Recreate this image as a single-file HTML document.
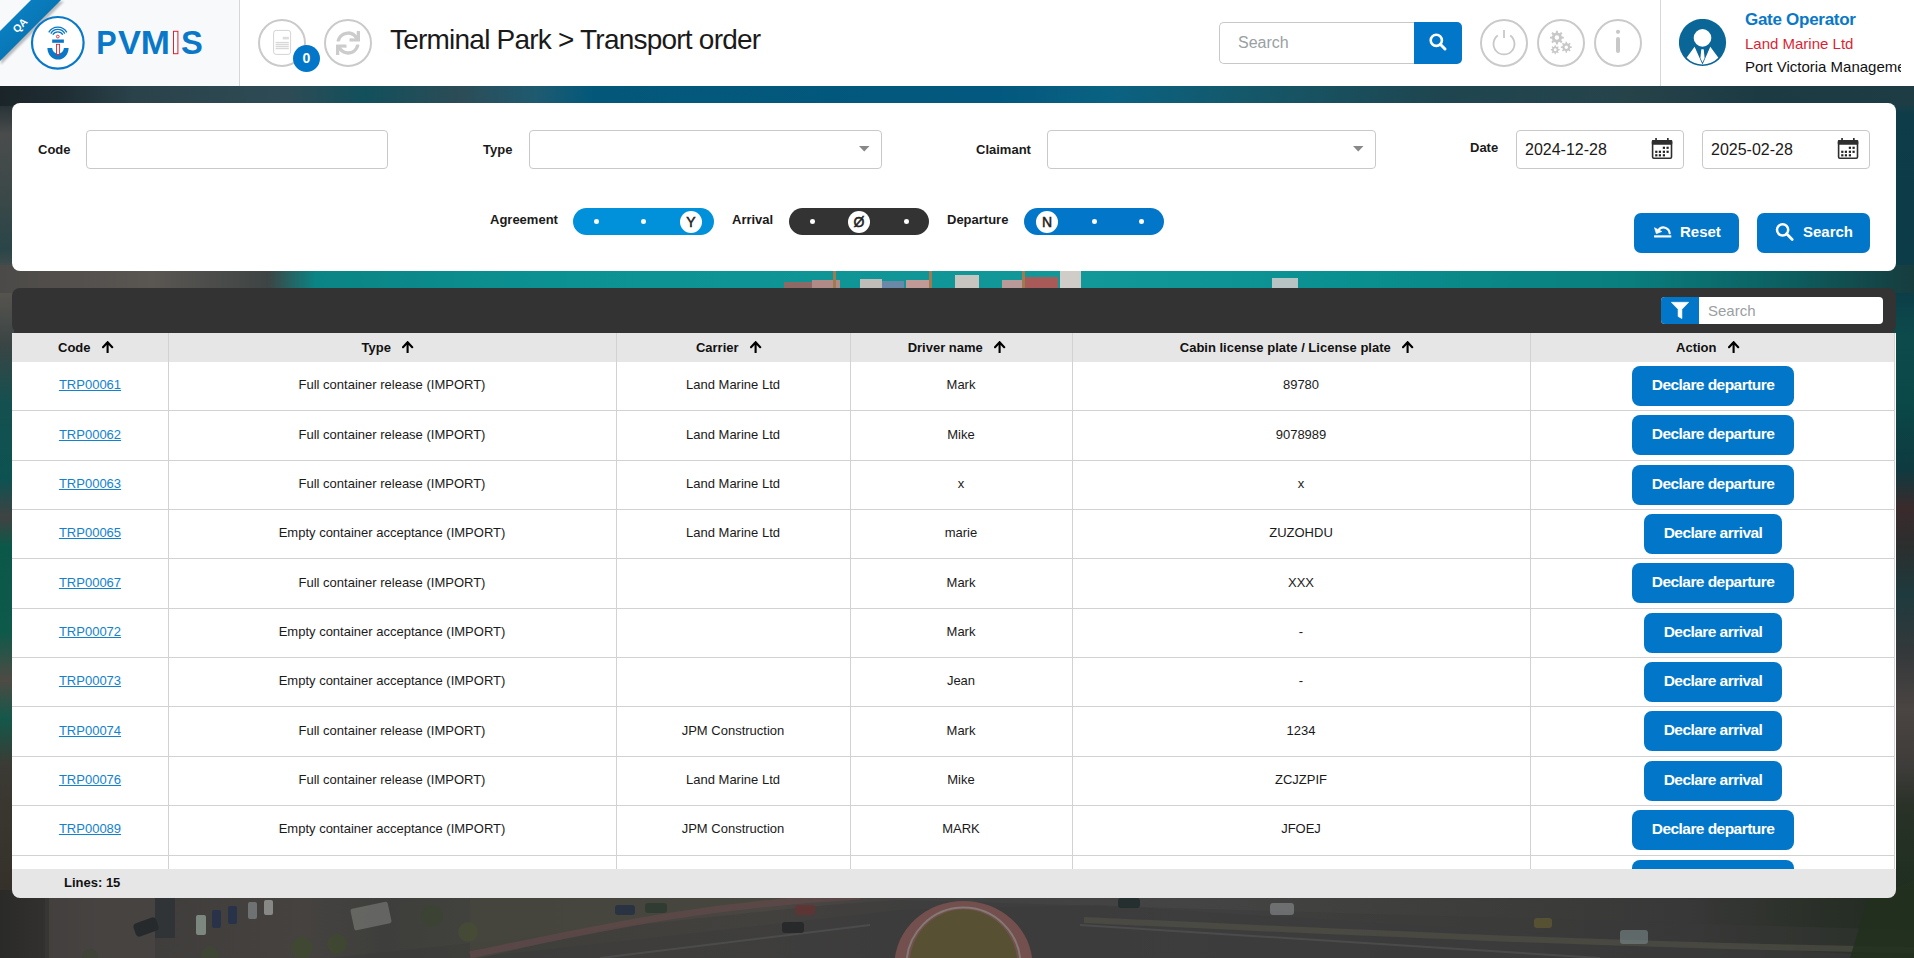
<!DOCTYPE html>
<html><head><meta charset="utf-8">
<style>
*{box-sizing:border-box;margin:0;padding:0}
html,body{width:1914px;height:958px;overflow:hidden}
body{font-family:"Liberation Sans",sans-serif;color:#1a1a1a;position:relative;background:#3a3b3a}
.abs{position:absolute}
#bg{position:absolute;left:0;top:0;width:1914px;height:958px;overflow:hidden}
#header{position:absolute;left:0;top:0;width:1914px;height:86px;background:#fff}
#logoarea{position:absolute;left:0;top:0;width:240px;height:86px;background:#f8f9fb;border-right:1px solid #d6d6d6}
.circ{position:absolute;border:2px solid #cacaca;border-radius:50%;background:#fff}
.panel{position:absolute;background:#fff}
.lbl{position:absolute;font-weight:bold;font-size:13px;color:#1a1a1a}
.inp{position:absolute;border:1px solid #c9c9c9;border-radius:4px;background:#fff}
.btn{position:absolute;background:#0277c9;color:#fff;border-radius:7px;font-weight:bold;font-size:15px;text-align:center}
#tbl{position:absolute;left:12px;top:333px;width:1884px;height:536px;background:#fff;overflow:hidden}
.hdr{position:absolute;left:0;top:0;width:1882px;height:29px;background:#e6e6e6}
.vl{position:absolute;top:0;width:1px;height:536px;background:#d2d2d2}
.hl{position:absolute;left:0;width:1882px;height:1px;background:#d2d2d2}
.th{position:absolute;top:0;height:29px;line-height:29px;font-weight:bold;font-size:13px;text-align:center;color:#111}
.td{position:absolute;font-size:13px;text-align:center;color:#1a1a1a;line-height:16px}
.lnk{color:#1282cf;text-decoration:underline}
.abtn{position:absolute;height:40px;line-height:37px;letter-spacing:-0.55px;background:#0277c9;color:#fff;border-radius:8px;font-weight:bold;font-size:15.5px;text-align:center}
.dot{position:absolute;width:5px;height:4.5px;border-radius:50%;background:#fff}
.knob{position:absolute;width:22px;height:22px;border-radius:50%;background:#fff;color:#222;font-size:14px;line-height:22px;text-align:center;-webkit-text-stroke:0.5px #222}
</style></head>
<body>
<div id="bg">
<svg width="1914" height="958" viewBox="0 0 1914 958" style="position:absolute;left:0;top:0">
 <defs>
  <linearGradient id="gtop" gradientUnits="userSpaceOnUse" x1="0" x2="1914" y1="0" y2="0">
   <stop offset="0" stop-color="#1b2529"/><stop offset="0.03" stop-color="#1e2c32"/><stop offset="0.07" stop-color="#2a424a"/>
   <stop offset="0.15" stop-color="#2e4b55"/><stop offset="0.19" stop-color="#11505c"/><stop offset="0.24" stop-color="#2c4c56"/>
   <stop offset="0.28" stop-color="#1e5a70"/><stop offset="0.31" stop-color="#03587a"/><stop offset="0.52" stop-color="#02587e"/>
   <stop offset="0.58" stop-color="#0a6282"/><stop offset="0.65" stop-color="#14586a"/><stop offset="0.75" stop-color="#1e4650"/>
   <stop offset="0.85" stop-color="#26434a"/><stop offset="0.92" stop-color="#1c3a42"/><stop offset="1" stop-color="#1e3c44"/>
  </linearGradient>
  <linearGradient id="ggap" gradientUnits="userSpaceOnUse" x1="0" x2="1914" y1="0" y2="0">
   <stop offset="0" stop-color="#4c4a48"/><stop offset="0.08" stop-color="#5a5652"/><stop offset="0.14" stop-color="#3e4444"/>
   <stop offset="0.165" stop-color="#0b8485"/><stop offset="0.3" stop-color="#0c9293"/><stop offset="0.57" stop-color="#129898"/>
   <stop offset="0.7" stop-color="#0a9090"/><stop offset="0.85" stop-color="#0a7e7e"/><stop offset="0.93" stop-color="#0c6062"/>
   <stop offset="1" stop-color="#173c3e"/>
  </linearGradient>
  <linearGradient id="gleft" gradientUnits="userSpaceOnUse" x1="0" x2="0" y1="0" y2="958">
   <stop offset="0.10" stop-color="#1c2a30"/><stop offset="0.14" stop-color="#4a4c4c"/><stop offset="0.21" stop-color="#3a4848"/>
   <stop offset="0.26" stop-color="#2a4548"/><stop offset="0.30" stop-color="#5a5550"/><stop offset="0.36" stop-color="#3a4444"/>
   <stop offset="0.42" stop-color="#155050"/><stop offset="0.50" stop-color="#0d5252"/><stop offset="0.54" stop-color="#404242"/><stop offset="0.57" stop-color="#0c5848"/>
   <stop offset="0.66" stop-color="#0e5a4a"/><stop offset="0.71" stop-color="#4e4a44"/><stop offset="0.75" stop-color="#13584a"/>
   <stop offset="0.80" stop-color="#3c3a34"/><stop offset="0.93" stop-color="#35302a"/><stop offset="1" stop-color="#2a2a28"/>
  </linearGradient>
  <linearGradient id="gright" gradientUnits="userSpaceOnUse" x1="0" x2="0" y1="0" y2="958">
   <stop offset="0.09" stop-color="#2a4448"/><stop offset="0.12" stop-color="#0e3c48"/><stop offset="0.3" stop-color="#0c3c48"/>
   <stop offset="0.35" stop-color="#0d4a4c"/><stop offset="0.42" stop-color="#0b4848"/><stop offset="0.49" stop-color="#0e3a40"/>
   <stop offset="0.53" stop-color="#3a2a2c"/><stop offset="0.57" stop-color="#2c2e2e"/><stop offset="0.62" stop-color="#1e3a3e"/>
   <stop offset="0.68" stop-color="#34383a"/><stop offset="0.74" stop-color="#4a4442"/><stop offset="0.8" stop-color="#3e3c3a"/>
   <stop offset="0.84" stop-color="#2a3228"/><stop offset="0.93" stop-color="#1e2e20"/><stop offset="1" stop-color="#1a2a1c"/>
  </linearGradient>
  <linearGradient id="gbot" gradientUnits="userSpaceOnUse" x1="0" x2="1914" y1="0" y2="0">
   <stop offset="0" stop-color="#2a2a28"/><stop offset="0.025" stop-color="#333130"/><stop offset="0.05" stop-color="#3e3c3a"/>
   <stop offset="0.16" stop-color="#454240"/><stop offset="0.2" stop-color="#3e3f3c"/><stop offset="0.3" stop-color="#45443e"/>
   <stop offset="0.4" stop-color="#4a4642"/><stop offset="0.5" stop-color="#414141"/><stop offset="0.62" stop-color="#444444"/>
   <stop offset="0.75" stop-color="#3e3e3c"/><stop offset="0.88" stop-color="#383838"/><stop offset="0.93" stop-color="#2e322c"/>
   <stop offset="1" stop-color="#1f2a1f"/>
  </linearGradient>
 </defs>
 <rect x="0" y="0" width="1914" height="958" fill="#2c3a3c"/>
 <rect x="0" y="80" width="1914" height="26" fill="url(#gtop)"/>
 <rect x="0" y="265" width="1914" height="28" fill="url(#ggap)"/>
 <rect x="0" y="0" width="14" height="958" fill="url(#gleft)"/>
 <rect x="1894" y="0" width="20" height="958" fill="url(#gright)"/>
 <rect x="0" y="890" width="1914" height="68" fill="url(#gbot)"/>
 <rect x="0" y="80" width="14" height="26" fill="url(#gtop)"/>
 <rect x="1894" y="80" width="20" height="26" fill="url(#gtop)"/>
 <rect x="0" y="265" width="14" height="28" fill="url(#ggap)"/>
 <rect x="1894" y="265" width="20" height="28" fill="url(#ggap)"/>
 <!-- ships in gap -->
 <rect x="784" y="282" width="30" height="6" fill="#8e6a66"/>
 <rect x="812" y="280" width="28" height="8" fill="#b08a86"/>
 <rect x="833" y="271" width="3" height="17" fill="#a07a50"/>
 <rect x="860" y="279" width="22" height="9" fill="#c0bcb8"/>
 <rect x="882" y="281" width="22" height="7" fill="#6a88a8"/>
 <rect x="906" y="280" width="24" height="8" fill="#c09a96"/>
 <rect x="929" y="271" width="3" height="17" fill="#a07a50"/>
 <rect x="955" y="275" width="24" height="13" fill="#c8c4c0"/>
 <rect x="1002" y="280" width="22" height="8" fill="#b89a98"/>
 <rect x="1024" y="277" width="34" height="11" fill="#a85a58"/>
 <rect x="1022" y="271" width="3" height="17" fill="#a07a50"/>
 <rect x="1060" y="271" width="21" height="17" fill="#d0ccc8"/>
 <rect x="1272" y="278" width="26" height="10" fill="#b8c4c4"/>
 <!-- bottom scene -->
 <path d="M470 958 L900 910 L1100 905 L1914 958 Z" fill="#3c3c3e" opacity="0.5"/>
 <path d="M330 958 C600 930 800 905 900 900 L1914 930 L1914 958 Z" fill="#3a3a3a" opacity="0.4"/>
 <ellipse cx="963.5" cy="965" rx="69" ry="64" fill="#73504e"/><ellipse cx="963.5" cy="965" rx="57" ry="57.5" fill="none" stroke="#8a8a86" stroke-width="2" opacity="0.7"/>
 <ellipse cx="963.5" cy="965" rx="54" ry="55.4" fill="#585032"/>
 <path d="M600 958 L870 925 M1080 925 L1600 958" stroke="#5a5a5a" stroke-width="2" opacity="0.5"/>
 <path d="M470 958 L480 958 C600 930 700 905 860 896 L860 890 L470 890 Z" fill="#46463e" opacity="0.8"/><path d="M470 955 C600 928 700 905 860 896" stroke="#5e4848" stroke-width="7" fill="none" opacity="0.8"/>
 <path d="M1084 920 C1300 930 1600 945 1914 950" stroke="#58584a" stroke-width="6" fill="none" opacity="0.5"/>
 <rect x="45" y="898" width="4" height="60" fill="#3a3836" opacity="0.8"/>
 <rect x="49" y="898" width="106" height="60" fill="#4a4644" opacity="0.7"/>
 <rect x="155" y="898" width="20" height="40" fill="#2c3236" opacity="0.8"/>
 <rect x="134" y="920" width="24" height="14" rx="4" fill="#262a2c" transform="rotate(-20 146 927)"/>
 <rect x="196" y="915" width="10" height="20" rx="2" fill="#8a9a90" opacity="0.8"/>
 <rect x="212" y="910" width="9" height="18" rx="2" fill="#26324a" opacity="0.9"/>
 <rect x="228" y="906" width="9" height="18" rx="2" fill="#26324a" opacity="0.9"/>
 <rect x="248" y="902" width="9" height="17" rx="2" fill="#7a7e80" opacity="0.8"/>
 <rect x="264" y="900" width="9" height="15" rx="2" fill="#9a9a98" opacity="0.8"/>
 <rect x="352" y="905" width="38" height="22" rx="2" fill="#6e6e6c" opacity="0.8" transform="rotate(-12 371 916)"/>
 <circle cx="302" cy="948" r="11" fill="#3e4a2e" opacity="0.7"/>
 <circle cx="337" cy="944" r="10" fill="#3e4a2e" opacity="0.7"/>
 <circle cx="432" cy="916" r="11" fill="#3a4530" opacity="0.7"/>
 <circle cx="468" cy="932" r="10" fill="#465030" opacity="0.6"/>
 <circle cx="210" cy="955" r="9" fill="#3e4a2e" opacity="0.6"/>
 <circle cx="90" cy="957" r="8" fill="#3a4430" opacity="0.5"/>
 <rect x="615" y="905" width="20" height="10" rx="3" fill="#232e44" opacity="0.8"/>
 <rect x="645" y="903" width="22" height="10" rx="3" fill="#2a3a30" opacity="0.8"/>
 <rect x="795" y="905" width="20" height="10" rx="3" fill="#6a3030" opacity="0.7"/>
 <rect x="782" y="922" width="22" height="11" rx="3" fill="#222426" opacity="0.8"/>
 <rect x="1118" y="898" width="22" height="10" rx="3" fill="#1e2a2a" opacity="0.8"/>
 <rect x="1270" y="903" width="24" height="12" rx="3" fill="#8a8e90" opacity="0.6"/>
 <rect x="1620" y="930" width="28" height="14" rx="3" fill="#7a8a8a" opacity="0.6"/>
 <rect x="1534" y="918" width="18" height="10" rx="3" fill="#6a6030" opacity="0.6"/>
 <path d="M1868 898 L1914 880 L1914 958 L1850 958 Z" fill="#22301f" opacity="0.85"/>
</svg>
</div>

<div id="header">
 <div id="logoarea"></div>
 <svg class="abs" style="left:0;top:0" width="240" height="86" viewBox="0 0 240 86">
  <defs><linearGradient id="rib" x1="0" y1="0" x2="1" y2="1"><stop offset="0" stop-color="#0b86cc"/><stop offset="1" stop-color="#06679f"/></linearGradient>
  <filter id="sh" x="-20%" y="-20%" width="140%" height="140%"><feGaussianBlur stdDeviation="1.2"/></filter></defs>
  <polygon points="33,0 63,0 0,63 0,33" fill="#000" opacity="0.25" filter="url(#sh)" transform="translate(1,1.5)"/>
  <polygon points="31,0 61,0 0,61 0,31" fill="url(#rib)"/>
  <text x="19.8" y="29.2" transform="rotate(-45 19.8 25.2)" fill="#fff" font-size="10.5" font-weight="bold" font-family="Liberation Sans" text-anchor="middle">QA</text>
  <circle cx="57.8" cy="42.8" r="25.8" fill="#fff" stroke="#0a78c8" stroke-width="2.2"/>
  <path d="M48.8 32.4 A10.4 10.4 0 0 1 66.8 32.4" fill="none" stroke="#0a78c8" stroke-width="1.3"/>
  <path d="M50.8 33.6 A8 8 0 0 1 64.8 33.6" fill="none" stroke="#0a78c8" stroke-width="1.3"/>
  <path d="M52.8 34.8 A5.7 5.7 0 0 1 62.8 34.8" fill="none" stroke="#0a78c8" stroke-width="1.3"/>
  <circle cx="57.8" cy="36.6" r="1.4" fill="#fff" stroke="#e02030" stroke-width="0.9"/>
  <rect x="52.2" y="39.5" width="11.7" height="3.3" fill="#0a78c8"/>
  <path d="M47.4 48 H52.2 A5.85 5.6 0 0 0 63.9 48 H68.6 A10.6 11.6 0 0 1 47.4 48 Z" fill="#0a78c8"/>
  <rect x="56.5" y="44.3" width="3.1" height="10.2" fill="#fff" stroke="#e02030" stroke-width="0.9"/>
  <text transform="translate(96.20 54.2) scale(0.926 1)" fill="#0a78c8" font-size="33" font-weight="bold" font-family="Liberation Sans">P</text><text transform="translate(118.00 54.2) scale(1.041 1)" fill="#0a78c8" font-size="33" font-weight="bold" font-family="Liberation Sans">V</text><text transform="translate(140.70 54.2) scale(1.062 1)" fill="#0a78c8" font-size="33" font-weight="bold" font-family="Liberation Sans">M</text>
  <rect x="173.5" y="31.3" width="4.4" height="22.4" fill="#fff" stroke="#e02030" stroke-width="1"/>
  <text transform="translate(181.00 54.2) scale(0.990 1)" fill="#0a78c8" font-size="33" font-weight="bold" font-family="Liberation Sans">S</text>
 </svg>
 <div class="circ" style="left:258px;top:19px;width:48px;height:48px"></div>
 <svg class="abs" style="left:270px;top:28px" width="26" height="30" viewBox="0 0 26 30">
  <rect x="3.6" y="2.4" width="17" height="24" rx="2.5" fill="#fff" stroke="#d4d4d4" stroke-width="1"/>
  <rect x="12.7" y="8.8" width="6.2" height="2.6" fill="#dcdcdc"/>
  <rect x="5.6" y="13.9" width="13.2" height="1.3" fill="#d8d8d8"/>
  <rect x="5.6" y="15.9" width="13.2" height="1.3" fill="#d8d8d8"/>
  <rect x="5.6" y="17.9" width="13.2" height="1.3" fill="#d8d8d8"/>
  <rect x="5.6" y="19.9" width="13.2" height="1.3" fill="#d8d8d8"/>
 </svg>
 <div class="abs" style="left:293px;top:44.5px;width:27px;height:27px;border-radius:50%;background:#0277c9;color:#fff;font-weight:bold;font-size:14px;line-height:27px;text-align:center">0</div>
 <div class="circ" style="left:324px;top:19px;width:48px;height:48px"></div>
 <svg class="abs" style="left:336px;top:31px" width="24" height="24" viewBox="0 0 512 512">
  <path fill="#cccccc" d="M440.65 12.57l4 82.77A247.16 247.16 0 0 0 255.83 8C134.73 8 33.91 94.92 12.29 209.82A12 12 0 0 0 24.09 224h49.05a12 12 0 0 0 11.67-9.26 175.91 175.91 0 0 1 317-56.94l-101.46-4.86a12 12 0 0 0-12.57 12v47.41a12 12 0 0 0 12 12H500a12 12 0 0 0 12-12V12a12 12 0 0 0-12-12h-47.37a12 12 0 0 0-11.98 12.57zM255.83 432a175.61 175.61 0 0 1-146-77.8l101.8 4.87a12 12 0 0 0 12.57-12v-47.4a12 12 0 0 0-12-12H12a12 12 0 0 0-12 12V500a12 12 0 0 0 12 12h47.35a12 12 0 0 0 12-12.6l-4.15-82.57A247.17 247.17 0 0 0 255.83 504c121.11 0 221.93-86.92 243.55-201.82a12 12 0 0 0-11.8-14.18h-49.05a12 12 0 0 0-11.67 9.26A175.86 175.86 0 0 1 255.83 432z"/>
 </svg>
 <div class="abs" style="left:390px;top:22px;font-size:28px;line-height:36px;letter-spacing:-0.78px;color:#1a1a1a;white-space:nowrap">Terminal Park &gt; Transport order</div>

 <div class="abs" style="left:1219px;top:22px;width:196px;height:42px;border:1px solid #c8c8c8;border-right:none;border-radius:5px 0 0 5px;background:#fff"></div>
 <div class="abs" style="left:1238px;top:33px;font-size:16px;line-height:20px;color:#9aa0a3">Search</div>
 <div class="abs" style="left:1414px;top:22px;width:48px;height:42px;background:#0277c9;border-radius:0 5px 5px 0"></div>
 <svg class="abs" style="left:1428px;top:32px" width="20" height="20" viewBox="0 0 20 20">
  <circle cx="8.3" cy="8.3" r="5.6" fill="none" stroke="#fff" stroke-width="2.6"/>
  <line x1="12.3" y1="12.3" x2="17" y2="17" stroke="#fff" stroke-width="3" stroke-linecap="round"/>
 </svg>

 <div class="circ" style="left:1480px;top:19px;width:48px;height:48px"></div>
 <svg class="abs" style="left:1480px;top:19px" width="48" height="48" viewBox="0 0 48 48">
  <path d="M17.8 16.5 A10.5 10.5 0 1 0 30.2 16.5" fill="none" stroke="#c8c8c8" stroke-width="1.8"/>
  <line x1="24" y1="11" x2="24" y2="19" stroke="#c8c8c8" stroke-width="1.8"/>
 </svg>
 <div class="circ" style="left:1537px;top:19px;width:48px;height:48px"></div>
 <svg class="abs" style="left:1537px;top:19px" width="48" height="48" viewBox="0 0 48 48"><path fill-rule="evenodd" fill="#c8c8c8" d="M24.82 17.52 L26.84 17.70 L26.84 19.50 L24.82 19.68 L24.56 20.53 L24.14 21.32 L25.45 22.87 L24.17 24.15 L22.62 22.84 L21.83 23.26 L20.98 23.52 L20.80 25.54 L19.00 25.54 L18.82 23.52 L17.97 23.26 L17.18 22.84 L15.63 24.15 L14.35 22.87 L15.66 21.32 L15.24 20.53 L14.98 19.68 L12.96 19.50 L12.96 17.70 L14.98 17.52 L15.24 16.67 L15.66 15.88 L14.35 14.33 L15.63 13.05 L17.18 14.36 L17.97 13.94 L18.82 13.68 L19.00 11.66 L20.80 11.66 L20.98 13.68 L21.83 13.94 L22.62 14.36 L24.17 13.05 L25.45 14.33 L24.14 15.88 L24.56 16.67 Z M22.14 18.60 A2.24 2.24 0 1 0 17.66 18.60 A2.24 2.24 0 1 0 22.14 18.60 Z M33.17 27.35 L34.75 27.49 L34.75 28.91 L33.17 29.05 L32.96 29.72 L32.64 30.33 L33.66 31.55 L32.65 32.56 L31.43 31.54 L30.82 31.86 L30.15 32.07 L30.01 33.65 L28.59 33.65 L28.45 32.07 L27.78 31.86 L27.17 31.54 L25.95 32.56 L24.94 31.55 L25.96 30.33 L25.64 29.72 L25.43 29.05 L23.85 28.91 L23.85 27.49 L25.43 27.35 L25.64 26.68 L25.96 26.07 L24.94 24.85 L25.95 23.84 L27.17 24.86 L27.78 24.54 L28.45 24.33 L28.59 22.75 L30.01 22.75 L30.15 24.33 L30.82 24.54 L31.43 24.86 L32.65 23.84 L33.66 24.85 L32.64 26.07 L32.96 26.68 Z M31.06 28.20 A1.76 1.76 0 1 0 27.54 28.20 A1.76 1.76 0 1 0 31.06 28.20 Z M21.36 30.01 L22.66 30.12 L22.66 31.28 L21.36 31.39 L21.19 31.94 L20.93 32.45 L21.77 33.44 L20.94 34.27 L19.95 33.43 L19.44 33.69 L18.89 33.86 L18.78 35.16 L17.62 35.16 L17.51 33.86 L16.96 33.69 L16.45 33.43 L15.46 34.27 L14.63 33.44 L15.47 32.45 L15.21 31.94 L15.04 31.39 L13.74 31.28 L13.74 30.12 L15.04 30.01 L15.21 29.46 L15.47 28.95 L14.63 27.96 L15.46 27.13 L16.45 27.97 L16.96 27.71 L17.51 27.54 L17.62 26.24 L18.78 26.24 L18.89 27.54 L19.44 27.71 L19.95 27.97 L20.94 27.13 L21.77 27.96 L20.93 28.95 L21.19 29.46 Z M19.64 30.70 A1.44 1.44 0 1 0 16.76 30.70 A1.44 1.44 0 1 0 19.64 30.70 Z"/></svg>
 <div class="circ" style="left:1594px;top:19px;width:48px;height:48px"></div>
 <svg class="abs" style="left:1594px;top:19px" width="48" height="48" viewBox="0 0 48 48">
  <circle cx="24" cy="12.8" r="2.1" fill="#c8c8c8"/>
  <rect x="22" y="18" width="4" height="16" rx="2" fill="#c8c8c8"/>
 </svg>

 <div class="abs" style="left:1660px;top:0;width:1px;height:86px;background:#d6d6d6"></div>
 <svg class="abs" style="left:1679px;top:19px" width="48" height="48" viewBox="0 0 48 48">
  <defs><clipPath id="avc"><circle cx="23.5" cy="23.5" r="22"/></clipPath></defs>
  <circle cx="23.5" cy="23.5" r="23.6" fill="#0b6698"/>
  <g clip-path="url(#avc)">
   <circle cx="23.5" cy="18.9" r="8.8" fill="#fff"/>
   <path d="M15.6 27.7 L23.5 45.5 L31.3 27.7 L47 49 L0 49 Z" fill="#fff"/>
   <path d="M22.3 30.3 L24.7 30.3 L25.6 39 L23.5 43.4 L21.4 39 Z" fill="#fff"/>
  </g>
 </svg>
 <div class="abs" style="left:1745px;top:9px;font-size:17px;font-weight:bold;line-height:22px;letter-spacing:-0.28px;color:#0a78c8;white-space:nowrap">Gate Operator</div>
 <div class="abs" style="left:1745px;top:34px;font-size:15px;line-height:20px;color:#dc1f35;white-space:nowrap">Land Marine Ltd</div>
 <div class="abs" style="left:1745px;top:57px;width:156px;overflow:hidden;font-size:15px;line-height:20px;color:#111;white-space:nowrap">Port Victoria Management</div>
</div>

<div class="panel" style="left:12px;top:103px;width:1884px;height:168px;border-radius:8px"></div>
<div class="lbl" style="left:38px;top:142px;line-height:16px">Code</div>
<div class="inp" style="left:86px;top:130px;width:302px;height:39px"></div>
<div class="lbl" style="left:483px;top:142px;line-height:16px">Type</div>
<div class="inp" style="left:529px;top:130px;width:353px;height:39px"></div>
<svg class="abs" style="left:859px;top:146px" width="11" height="6" viewBox="0 0 11 6"><path d="M0 0 H10.5 L5.25 5.5 Z" fill="#888"/></svg>
<div class="lbl" style="left:976px;top:142px;line-height:16px">Claimant</div>
<div class="inp" style="left:1047px;top:130px;width:329px;height:39px"></div>
<svg class="abs" style="left:1353px;top:146px" width="11" height="6" viewBox="0 0 11 6"><path d="M0 0 H10.5 L5.25 5.5 Z" fill="#888"/></svg>
<div class="lbl" style="left:1470px;top:140px;line-height:16px">Date</div>
<div class="inp" style="left:1516px;top:130px;width:168px;height:39px"></div>
<div class="abs" style="left:1525px;top:140px;font-size:16px;line-height:19px;color:#1a1a1a">2024-12-28</div>
<svg class="abs" style="left:1646px;top:134px" width="32" height="30" viewBox="0 0 32 30">
 <rect x="6.6" y="6.9" width="18.9" height="17.3" rx="1.2" fill="#fff" stroke="#2e2e2e" stroke-width="1.6"/>
 <rect x="5.8" y="6.1" width="20.5" height="4.7" rx="1" fill="#2e2e2e"/>
 <rect x="9.2" y="4" width="1.7" height="3" fill="#2e2e2e"/><rect x="21" y="4" width="1.7" height="3" fill="#2e2e2e"/>
 <rect x="16.8" y="12.7" width="2.2" height="2.2" fill="#222"/><rect x="20.5" y="12.7" width="2.2" height="2.2" fill="#222"/><rect x="9.2" y="16.7" width="2.2" height="2.2" fill="#222"/><rect x="12.8" y="16.7" width="2.2" height="2.2" fill="#222"/><rect x="16.8" y="16.7" width="2.2" height="2.2" fill="#222"/><rect x="20.5" y="16.7" width="2.2" height="2.2" fill="#222"/><rect x="9.2" y="20.2" width="2.2" height="2.2" fill="#222"/><rect x="12.8" y="20.2" width="2.2" height="2.2" fill="#222"/><rect x="16.8" y="20.2" width="2.2" height="2.2" fill="#222"/>
</svg>
<div class="inp" style="left:1702px;top:130px;width:168px;height:39px"></div>
<div class="abs" style="left:1711px;top:140px;font-size:16px;line-height:19px;color:#1a1a1a">2025-02-28</div>
<svg class="abs" style="left:1832px;top:134px" width="32" height="30" viewBox="0 0 32 30">
 <rect x="6.6" y="6.9" width="18.9" height="17.3" rx="1.2" fill="#fff" stroke="#2e2e2e" stroke-width="1.6"/>
 <rect x="5.8" y="6.1" width="20.5" height="4.7" rx="1" fill="#2e2e2e"/>
 <rect x="9.2" y="4" width="1.7" height="3" fill="#2e2e2e"/><rect x="21" y="4" width="1.7" height="3" fill="#2e2e2e"/>
 <rect x="16.8" y="12.7" width="2.2" height="2.2" fill="#222"/><rect x="20.5" y="12.7" width="2.2" height="2.2" fill="#222"/><rect x="9.2" y="16.7" width="2.2" height="2.2" fill="#222"/><rect x="12.8" y="16.7" width="2.2" height="2.2" fill="#222"/><rect x="16.8" y="16.7" width="2.2" height="2.2" fill="#222"/><rect x="20.5" y="16.7" width="2.2" height="2.2" fill="#222"/><rect x="9.2" y="20.2" width="2.2" height="2.2" fill="#222"/><rect x="12.8" y="20.2" width="2.2" height="2.2" fill="#222"/><rect x="16.8" y="20.2" width="2.2" height="2.2" fill="#222"/>
</svg>

<div class="lbl" style="left:490px;top:212px;line-height:16px">Agreement</div>
<div class="abs" style="left:573px;top:208px;width:141px;height:27px;border-radius:14px;background:#0091da"></div>
<div class="dot" style="left:594px;top:219.2px"></div><div class="dot" style="left:641px;top:219.2px"></div>
<div class="knob" style="left:679.9px;top:210.8px">Y</div>
<div class="lbl" style="left:732px;top:212px;line-height:16px">Arrival</div>
<div class="abs" style="left:789px;top:208px;width:140px;height:27px;border-radius:14px;background:#333"></div>
<div class="dot" style="left:809.5px;top:219.2px"></div><div class="dot" style="left:903.5px;top:219.2px"></div>
<div class="knob" style="left:847.9px;top:210.8px">&Oslash;</div>
<div class="lbl" style="left:947px;top:212px;line-height:16px">Departure</div>
<div class="abs" style="left:1024px;top:208px;width:140px;height:27px;border-radius:14px;background:#0277c9"></div>
<div class="dot" style="left:1091.5px;top:219.2px"></div><div class="dot" style="left:1139px;top:219.2px"></div>
<div class="knob" style="left:1036px;top:210.8px">N</div>

<div class="btn" style="left:1634px;top:213px;width:105px;height:40px"></div>
<svg class="abs" style="left:1653px;top:225px" width="19" height="15" viewBox="0 0 19 15">
 <path d="M16.7 8.3 A6.2 6.6 0 0 0 5.5 5.2" fill="none" stroke="#fff" stroke-width="2.1" stroke-linecap="round"/>
 <path d="M1.5 2.7 L3.3 8.7 L8.9 6.5 Z" fill="#fff" stroke="#fff" stroke-width="0.6" stroke-linejoin="round"/>
 <rect x="1.1" y="10.3" width="17.2" height="2.2" fill="#fff"/>
</svg>
<div class="abs" style="left:1680px;top:222px;font-size:15px;font-weight:bold;line-height:19px;color:#fff">Reset</div>
<div class="btn" style="left:1757px;top:213px;width:113px;height:40px"></div>
<svg class="abs" style="left:1775px;top:222px" width="20" height="20" viewBox="0 0 20 20">
 <circle cx="7.6" cy="7.8" r="5.6" fill="none" stroke="#fff" stroke-width="2.5"/>
 <line x1="11.6" y1="11.8" x2="17.2" y2="17.4" stroke="#fff" stroke-width="2.8" stroke-linecap="round"/>
</svg>
<div class="abs" style="left:1803px;top:222px;font-size:15px;font-weight:bold;line-height:19px;color:#fff">Search</div>

<div class="abs" style="left:12px;top:288px;width:1884px;height:45px;background:#333;border-radius:8px"></div>
<div class="abs" style="left:1661px;top:297px;width:222px;height:27px;background:#fff;border-radius:4px"></div>
<div class="abs" style="left:1661px;top:297px;width:38px;height:27px;background:#0277c9;border-radius:4px 0 0 4px"></div>
<svg class="abs" style="left:1670px;top:301px" width="20" height="20" viewBox="0 0 20 20"><path d="M1.3 1.3 H18.7 L11.9 8.3 V17.6 L8.1 15.5 V8.3 Z" fill="#fff" stroke="#fff" stroke-width="0.6" stroke-linejoin="round"/></svg>
<div class="abs" style="left:1708px;top:302px;font-size:15px;line-height:18px;color:#9aa0a3">Search</div>

<div id="tbl">
<div class="hdr"></div>
<div class="th" style="left:0px;width:156px;padding-right:8px">Code<svg width="12" height="12" viewBox="0 0 12 12" style="margin-left:11.5px;vertical-align:-1px"><path d="M5.6 11.4 V1.2 M1 6.2 L5.6 1.2 L10.2 6.2" fill="none" stroke="#000" stroke-width="2.1" stroke-linecap="round" stroke-linejoin="miter"/></svg></div>
<div class="th" style="left:156px;width:448px;padding-right:8px">Type<svg width="12" height="12" viewBox="0 0 12 12" style="margin-left:11.5px;vertical-align:-1px"><path d="M5.6 11.4 V1.2 M1 6.2 L5.6 1.2 L10.2 6.2" fill="none" stroke="#000" stroke-width="2.1" stroke-linecap="round" stroke-linejoin="miter"/></svg></div>
<div class="th" style="left:604px;width:234px;padding-right:8px">Carrier<svg width="12" height="12" viewBox="0 0 12 12" style="margin-left:11.5px;vertical-align:-1px"><path d="M5.6 11.4 V1.2 M1 6.2 L5.6 1.2 L10.2 6.2" fill="none" stroke="#000" stroke-width="2.1" stroke-linecap="round" stroke-linejoin="miter"/></svg></div>
<div class="th" style="left:838px;width:222px;padding-right:8px">Driver name<svg width="12" height="12" viewBox="0 0 12 12" style="margin-left:11.5px;vertical-align:-1px"><path d="M5.6 11.4 V1.2 M1 6.2 L5.6 1.2 L10.2 6.2" fill="none" stroke="#000" stroke-width="2.1" stroke-linecap="round" stroke-linejoin="miter"/></svg></div>
<div class="th" style="left:1060px;width:458px;padding-right:8px">Cabin license plate / License plate<svg width="12" height="12" viewBox="0 0 12 12" style="margin-left:11.5px;vertical-align:-1px"><path d="M5.6 11.4 V1.2 M1 6.2 L5.6 1.2 L10.2 6.2" fill="none" stroke="#000" stroke-width="2.1" stroke-linecap="round" stroke-linejoin="miter"/></svg></div>
<div class="th" style="left:1518px;width:364px;padding-right:8px">Action<svg width="12" height="12" viewBox="0 0 12 12" style="margin-left:11.5px;vertical-align:-1px"><path d="M5.6 11.4 V1.2 M1 6.2 L5.6 1.2 L10.2 6.2" fill="none" stroke="#000" stroke-width="2.1" stroke-linecap="round" stroke-linejoin="miter"/></svg></div>
<div class="vl" style="left:156px"></div>
<div class="vl" style="left:604px"></div>
<div class="vl" style="left:838px"></div>
<div class="vl" style="left:1060px"></div>
<div class="vl" style="left:1518px"></div>
<div class="vl" style="left:1882px"></div>
<div class="hl" style="top:77px"></div>
<div class="hl" style="top:127px"></div>
<div class="hl" style="top:176px"></div>
<div class="hl" style="top:225px"></div>
<div class="hl" style="top:275px"></div>
<div class="hl" style="top:324px"></div>
<div class="hl" style="top:373px"></div>
<div class="hl" style="top:423px"></div>
<div class="hl" style="top:472px"></div>
<div class="hl" style="top:522px"></div>
<div class="td" style="left:0px;top:44px;width:156px"><span class="lnk">TRP00061</span></div>
<div class="td" style="left:156px;top:44px;width:448px">Full container release (IMPORT)</div>
<div class="td" style="left:604px;top:44px;width:234px">Land Marine Ltd</div>
<div class="td" style="left:838px;top:44px;width:222px">Mark</div>
<div class="td" style="left:1060px;top:44px;width:458px">89780</div>
<div class="abtn" style="left:1620px;top:33px;width:162px">Declare departure</div>
<div class="td" style="left:0px;top:94px;width:156px"><span class="lnk">TRP00062</span></div>
<div class="td" style="left:156px;top:94px;width:448px">Full container release (IMPORT)</div>
<div class="td" style="left:604px;top:94px;width:234px">Land Marine Ltd</div>
<div class="td" style="left:838px;top:94px;width:222px">Mike</div>
<div class="td" style="left:1060px;top:94px;width:458px">9078989</div>
<div class="abtn" style="left:1620px;top:82px;width:162px">Declare departure</div>
<div class="td" style="left:0px;top:143px;width:156px"><span class="lnk">TRP00063</span></div>
<div class="td" style="left:156px;top:143px;width:448px">Full container release (IMPORT)</div>
<div class="td" style="left:604px;top:143px;width:234px">Land Marine Ltd</div>
<div class="td" style="left:838px;top:143px;width:222px">x</div>
<div class="td" style="left:1060px;top:143px;width:458px">x</div>
<div class="abtn" style="left:1620px;top:132px;width:162px">Declare departure</div>
<div class="td" style="left:0px;top:192px;width:156px"><span class="lnk">TRP00065</span></div>
<div class="td" style="left:156px;top:192px;width:448px">Empty container acceptance (IMPORT)</div>
<div class="td" style="left:604px;top:192px;width:234px">Land Marine Ltd</div>
<div class="td" style="left:838px;top:192px;width:222px">marie</div>
<div class="td" style="left:1060px;top:192px;width:458px">ZUZOHDU</div>
<div class="abtn" style="left:1632px;top:181px;width:138px">Declare arrival</div>
<div class="td" style="left:0px;top:242px;width:156px"><span class="lnk">TRP00067</span></div>
<div class="td" style="left:156px;top:242px;width:448px">Full container release (IMPORT)</div>
<div class="td" style="left:604px;top:242px;width:234px"></div>
<div class="td" style="left:838px;top:242px;width:222px">Mark</div>
<div class="td" style="left:1060px;top:242px;width:458px">XXX</div>
<div class="abtn" style="left:1620px;top:230px;width:162px">Declare departure</div>
<div class="td" style="left:0px;top:291px;width:156px"><span class="lnk">TRP00072</span></div>
<div class="td" style="left:156px;top:291px;width:448px">Empty container acceptance (IMPORT)</div>
<div class="td" style="left:604px;top:291px;width:234px"></div>
<div class="td" style="left:838px;top:291px;width:222px">Mark</div>
<div class="td" style="left:1060px;top:291px;width:458px">-</div>
<div class="abtn" style="left:1632px;top:280px;width:138px">Declare arrival</div>
<div class="td" style="left:0px;top:340px;width:156px"><span class="lnk">TRP00073</span></div>
<div class="td" style="left:156px;top:340px;width:448px">Empty container acceptance (IMPORT)</div>
<div class="td" style="left:604px;top:340px;width:234px"></div>
<div class="td" style="left:838px;top:340px;width:222px">Jean</div>
<div class="td" style="left:1060px;top:340px;width:458px">-</div>
<div class="abtn" style="left:1632px;top:329px;width:138px">Declare arrival</div>
<div class="td" style="left:0px;top:390px;width:156px"><span class="lnk">TRP00074</span></div>
<div class="td" style="left:156px;top:390px;width:448px">Full container release (IMPORT)</div>
<div class="td" style="left:604px;top:390px;width:234px">JPM Construction</div>
<div class="td" style="left:838px;top:390px;width:222px">Mark</div>
<div class="td" style="left:1060px;top:390px;width:458px">1234</div>
<div class="abtn" style="left:1632px;top:378px;width:138px">Declare arrival</div>
<div class="td" style="left:0px;top:439px;width:156px"><span class="lnk">TRP00076</span></div>
<div class="td" style="left:156px;top:439px;width:448px">Full container release (IMPORT)</div>
<div class="td" style="left:604px;top:439px;width:234px">Land Marine Ltd</div>
<div class="td" style="left:838px;top:439px;width:222px">Mike</div>
<div class="td" style="left:1060px;top:439px;width:458px">ZCJZPIF</div>
<div class="abtn" style="left:1632px;top:428px;width:138px">Declare arrival</div>
<div class="td" style="left:0px;top:488px;width:156px"><span class="lnk">TRP00089</span></div>
<div class="td" style="left:156px;top:488px;width:448px">Empty container acceptance (IMPORT)</div>
<div class="td" style="left:604px;top:488px;width:234px">JPM Construction</div>
<div class="td" style="left:838px;top:488px;width:222px">MARK</div>
<div class="td" style="left:1060px;top:488px;width:458px">JFOEJ</div>
<div class="abtn" style="left:1620px;top:477px;width:162px">Declare departure</div>
<div class="abtn" style="left:1620px;top:527px;width:162px"></div>
</div>

<div class="abs" style="left:12px;top:869px;width:1884px;height:29px;background:#e6e6e6;border-radius:0 0 8px 8px"></div>
<div class="abs" style="left:64px;top:875px;font-size:13px;font-weight:bold;line-height:16px;color:#111">Lines: 15</div>
</body></html>
